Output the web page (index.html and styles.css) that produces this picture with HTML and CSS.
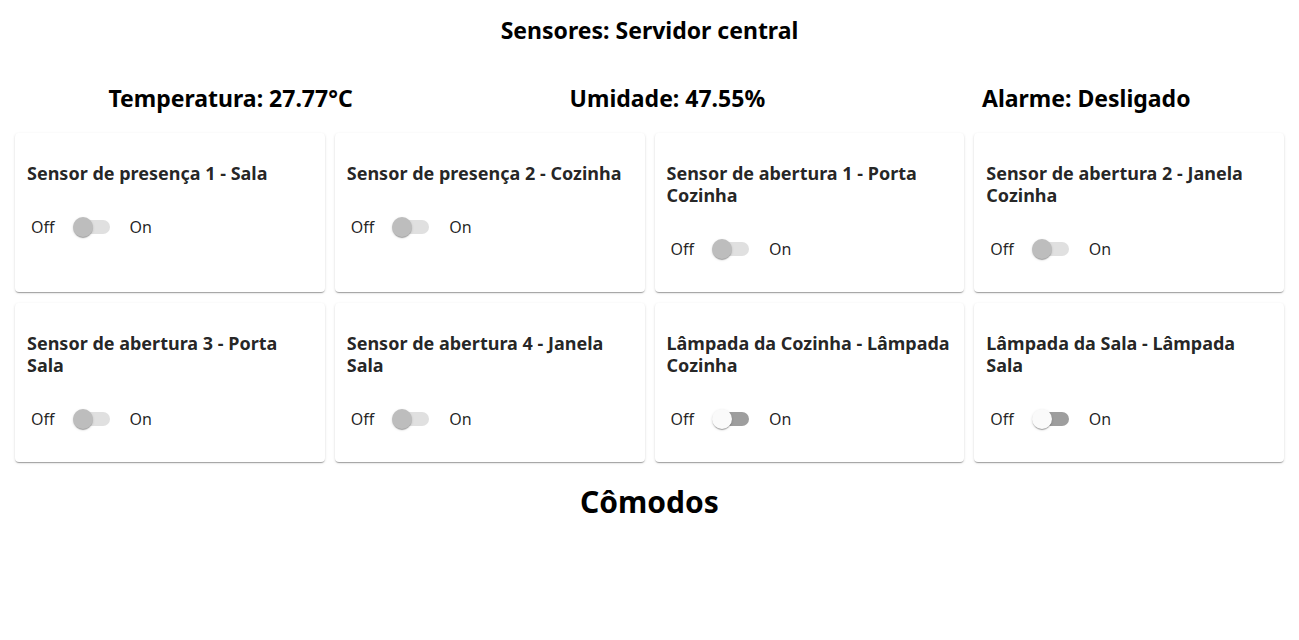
FILE: index.html
```html
<!DOCTYPE html>
<html lang="pt">
<head>
<meta charset="utf-8">
<title>Sensores</title>
<link rel="stylesheet" href="styles.css">
</head>
<body>
<h2 class="title">Sensores: Servidor central</h2>
<div class="stats">
  <h2 class="stat">Temperatura: 27.77°C</h2>
  <h2 class="stat">Umidade: 47.55%</h2>
  <h2 class="stat">Alarme: Desligado</h2>
</div>
<div class="grid">
  <div class="card">
    <div class="card-title">Sensor de presença 1 - Sala</div>
    <div class="toggle"><span class="lbl">Off</span><span class="switch disabled"><span class="track"></span><span class="thumb"></span></span><span class="lbl">On</span></div>
  </div>
  <div class="card">
    <div class="card-title">Sensor de presença 2 - Cozinha</div>
    <div class="toggle"><span class="lbl">Off</span><span class="switch disabled"><span class="track"></span><span class="thumb"></span></span><span class="lbl">On</span></div>
  </div>
  <div class="card">
    <div class="card-title">Sensor de abertura 1 - Porta Cozinha</div>
    <div class="toggle"><span class="lbl">Off</span><span class="switch disabled"><span class="track"></span><span class="thumb"></span></span><span class="lbl">On</span></div>
  </div>
  <div class="card">
    <div class="card-title">Sensor de abertura 2 - Janela Cozinha</div>
    <div class="toggle"><span class="lbl">Off</span><span class="switch disabled"><span class="track"></span><span class="thumb"></span></span><span class="lbl">On</span></div>
  </div>
  <div class="card">
    <div class="card-title">Sensor de abertura 3 - Porta Sala</div>
    <div class="toggle"><span class="lbl">Off</span><span class="switch disabled"><span class="track"></span><span class="thumb"></span></span><span class="lbl">On</span></div>
  </div>
  <div class="card">
    <div class="card-title">Sensor de abertura 4 - Janela Sala</div>
    <div class="toggle"><span class="lbl">Off</span><span class="switch disabled"><span class="track"></span><span class="thumb"></span></span><span class="lbl">On</span></div>
  </div>
  <div class="card">
    <div class="card-title">Lâmpada da Cozinha - Lâmpada Cozinha</div>
    <div class="toggle"><span class="lbl">Off</span><span class="switch"><span class="track"></span><span class="thumb"></span></span><span class="lbl">On</span></div>
  </div>
  <div class="card">
    <div class="card-title">Lâmpada da Sala - Lâmpada Sala</div>
    <div class="toggle"><span class="lbl">Off</span><span class="switch"><span class="track"></span><span class="thumb"></span></span><span class="lbl">On</span></div>
  </div>
</div>
<h1 class="rooms">Cômodos</h1>
</body>
</html>
```
FILE: styles.css
```css
html, body {
  margin: 0;
  padding: 0;
  background: #fff;
}
body {
  font-family: "Noto Sans", "Open Sans", sans-serif;
  color: #000;
}
.title {
  margin: 0;
  padding-top: 16px;
  font-size: 23px;
  line-height: 28px;
  font-weight: 700;
  text-align: center;
}
.stats {
  display: flex;
  justify-content: space-around;
  margin-top: 40px;
}
.stat {
  margin: 0;
  font-size: 23px;
  line-height: 28px;
  font-weight: 700;
}
.grid {
  display: grid;
  grid-template-columns: repeat(4, 1fr);
  gap: 11px 10px;
  padding: 21px 15px 0;
}
.card {
  background: #fff;
  border-radius: 4px;
  box-shadow: 0 2px 1px -1px rgba(0,0,0,0.2), 0 1px 1px 0 rgba(0,0,0,0.14), 0 1px 3px 0 rgba(0,0,0,0.12);
  padding: 29px 12px 24px;
  height: 159px;
  box-sizing: border-box;
  color: rgba(0,0,0,0.87);
}
.card-title {
  font-size: 18px;
  line-height: 22px;
  font-weight: 700;
}
.toggle {
  display: flex;
  align-items: center;
  height: 38px;
  margin-top: 24px;
  padding-left: 4px;
  font-size: 16px;
}
.switch {
  position: relative;
  width: 58px;
  height: 38px;
  margin: 0 8px 0 9px;
  flex: none;
}
.track {
  position: absolute;
  left: 12px;
  top: 12px;
  width: 34px;
  height: 14px;
  border-radius: 7px;
  background: #9e9e9e;
}
.thumb {
  position: absolute;
  left: 9px;
  top: 9px;
  width: 20px;
  height: 20px;
  border-radius: 50%;
  background: #fafafa;
  box-shadow: 0 2px 1px -1px rgba(0,0,0,0.2), 0 1px 1px 0 rgba(0,0,0,0.14), 0 1px 3px 0 rgba(0,0,0,0.12);
}
.switch.disabled .track {
  background: #e0e0e0;
}
.switch.disabled .thumb {
  background: #bdbdbd;
}
.rooms {
  margin: 22px 0 0;
  font-size: 30px;
  line-height: 36px;
  font-weight: 700;
  text-align: center;
}
```
